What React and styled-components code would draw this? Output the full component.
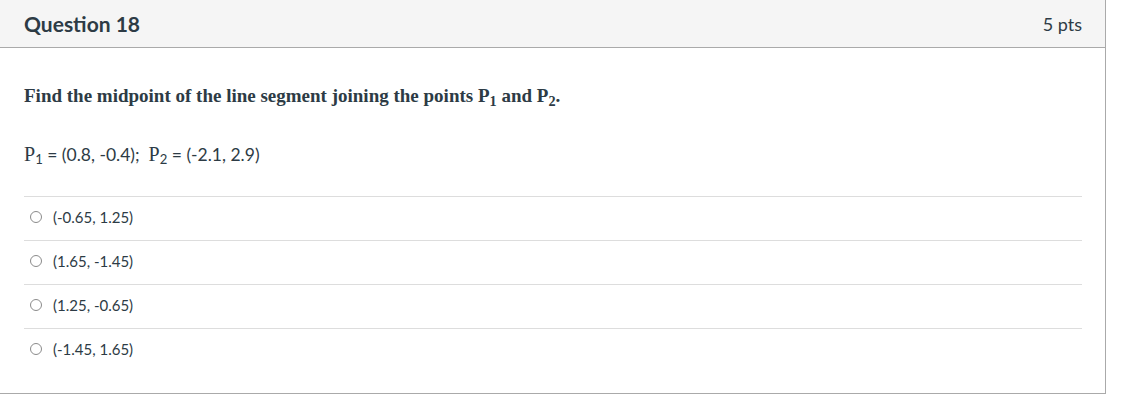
import React from "react";
import styled, { createGlobalStyle } from "styled-components";

const GlobalStyle = createGlobalStyle`
  body {
    margin: 0;
    background: #ffffff;
    font-family: "Lato", "Liberation Sans", sans-serif;
    color: #2d3b45;
  }
`;

const Card = styled.section`
  width: 1105px;
  margin: -1px 0 0 -1px;
  border: 1px solid #aaaaaa;
  background: #ffffff;
`;

const Header = styled.header`
  display: flex;
  align-items: center;
  justify-content: space-between;
  height: 47px;
  padding: 0 23px 0 24px;
  background: #f5f5f5;
  border-bottom: 1px solid #aaaaaa;
`;

const Title = styled.h2`
  margin: 0;
  font-family: "Lato", sans-serif;
  font-size: 21px;
  font-weight: 700;
  color: #2d3b45;
`;

const Points = styled.span`
  font-family: "Lato", sans-serif;
  font-size: 18px;
  color: #2d3b45;
`;

const Body = styled.div`
  padding: 34px 23px 21px 24px;
`;

const Prompt = styled.p`
  margin: 0;
  font-family: "Liberation Serif", serif;
  font-size: 19px;
  line-height: 28px;
  font-weight: 700;
`;

const Given = styled.p`
  margin: 31px 0 28px;
  font-family: "Lato", sans-serif;
  font-size: 17.5px;
  line-height: 27px;
`;

const Var = styled.span`
  font-family: "Liberation Serif", serif;
  font-size: 20px;
`;

const Sub = styled.sub`
  font-size: 0.75em;
  line-height: 0;
  vertical-align: -0.25em;
`;

const Answers = styled.ul`
  list-style: none;
  margin: 0;
  padding: 0;
`;

const Answer = styled.li`
  display: flex;
  align-items: center;
  gap: 11px;
  box-sizing: border-box;
  height: 44px;
  padding: 0 0 3px 6px;
  border-top: 1px solid #dddddd;
  font-size: 15px;
`;

const Radio = styled.span`
  width: 10px;
  height: 10px;
  border: 1px solid #8b8b8b;
  border-radius: 50%;
`;

const answers = ["(-0.65, 1.25)", "(1.65, -1.45)", "(1.25, -0.65)", "(-1.45, 1.65)"];

export default function App() {
  return (
    <>
      <GlobalStyle />
      <Card>
        <Header>
          <Title>Question 18</Title>
          <Points>5 pts</Points>
        </Header>
        <Body>
          <Prompt>
            Find the midpoint of the line segment joining the points P<Sub>1</Sub> and P
            <Sub>2</Sub>.
          </Prompt>
          <Given>
            <Var>P</Var>
            <Sub>1</Sub> = (0.8, -0.4);&nbsp; <Var>P</Var>
            <Sub>2</Sub> = (-2.1, 2.9)
          </Given>
          <Answers>
            {answers.map((a) => (
              <Answer key={a}>
                <Radio />
                {a}
              </Answer>
            ))}
          </Answers>
        </Body>
      </Card>
    </>
  );
}
